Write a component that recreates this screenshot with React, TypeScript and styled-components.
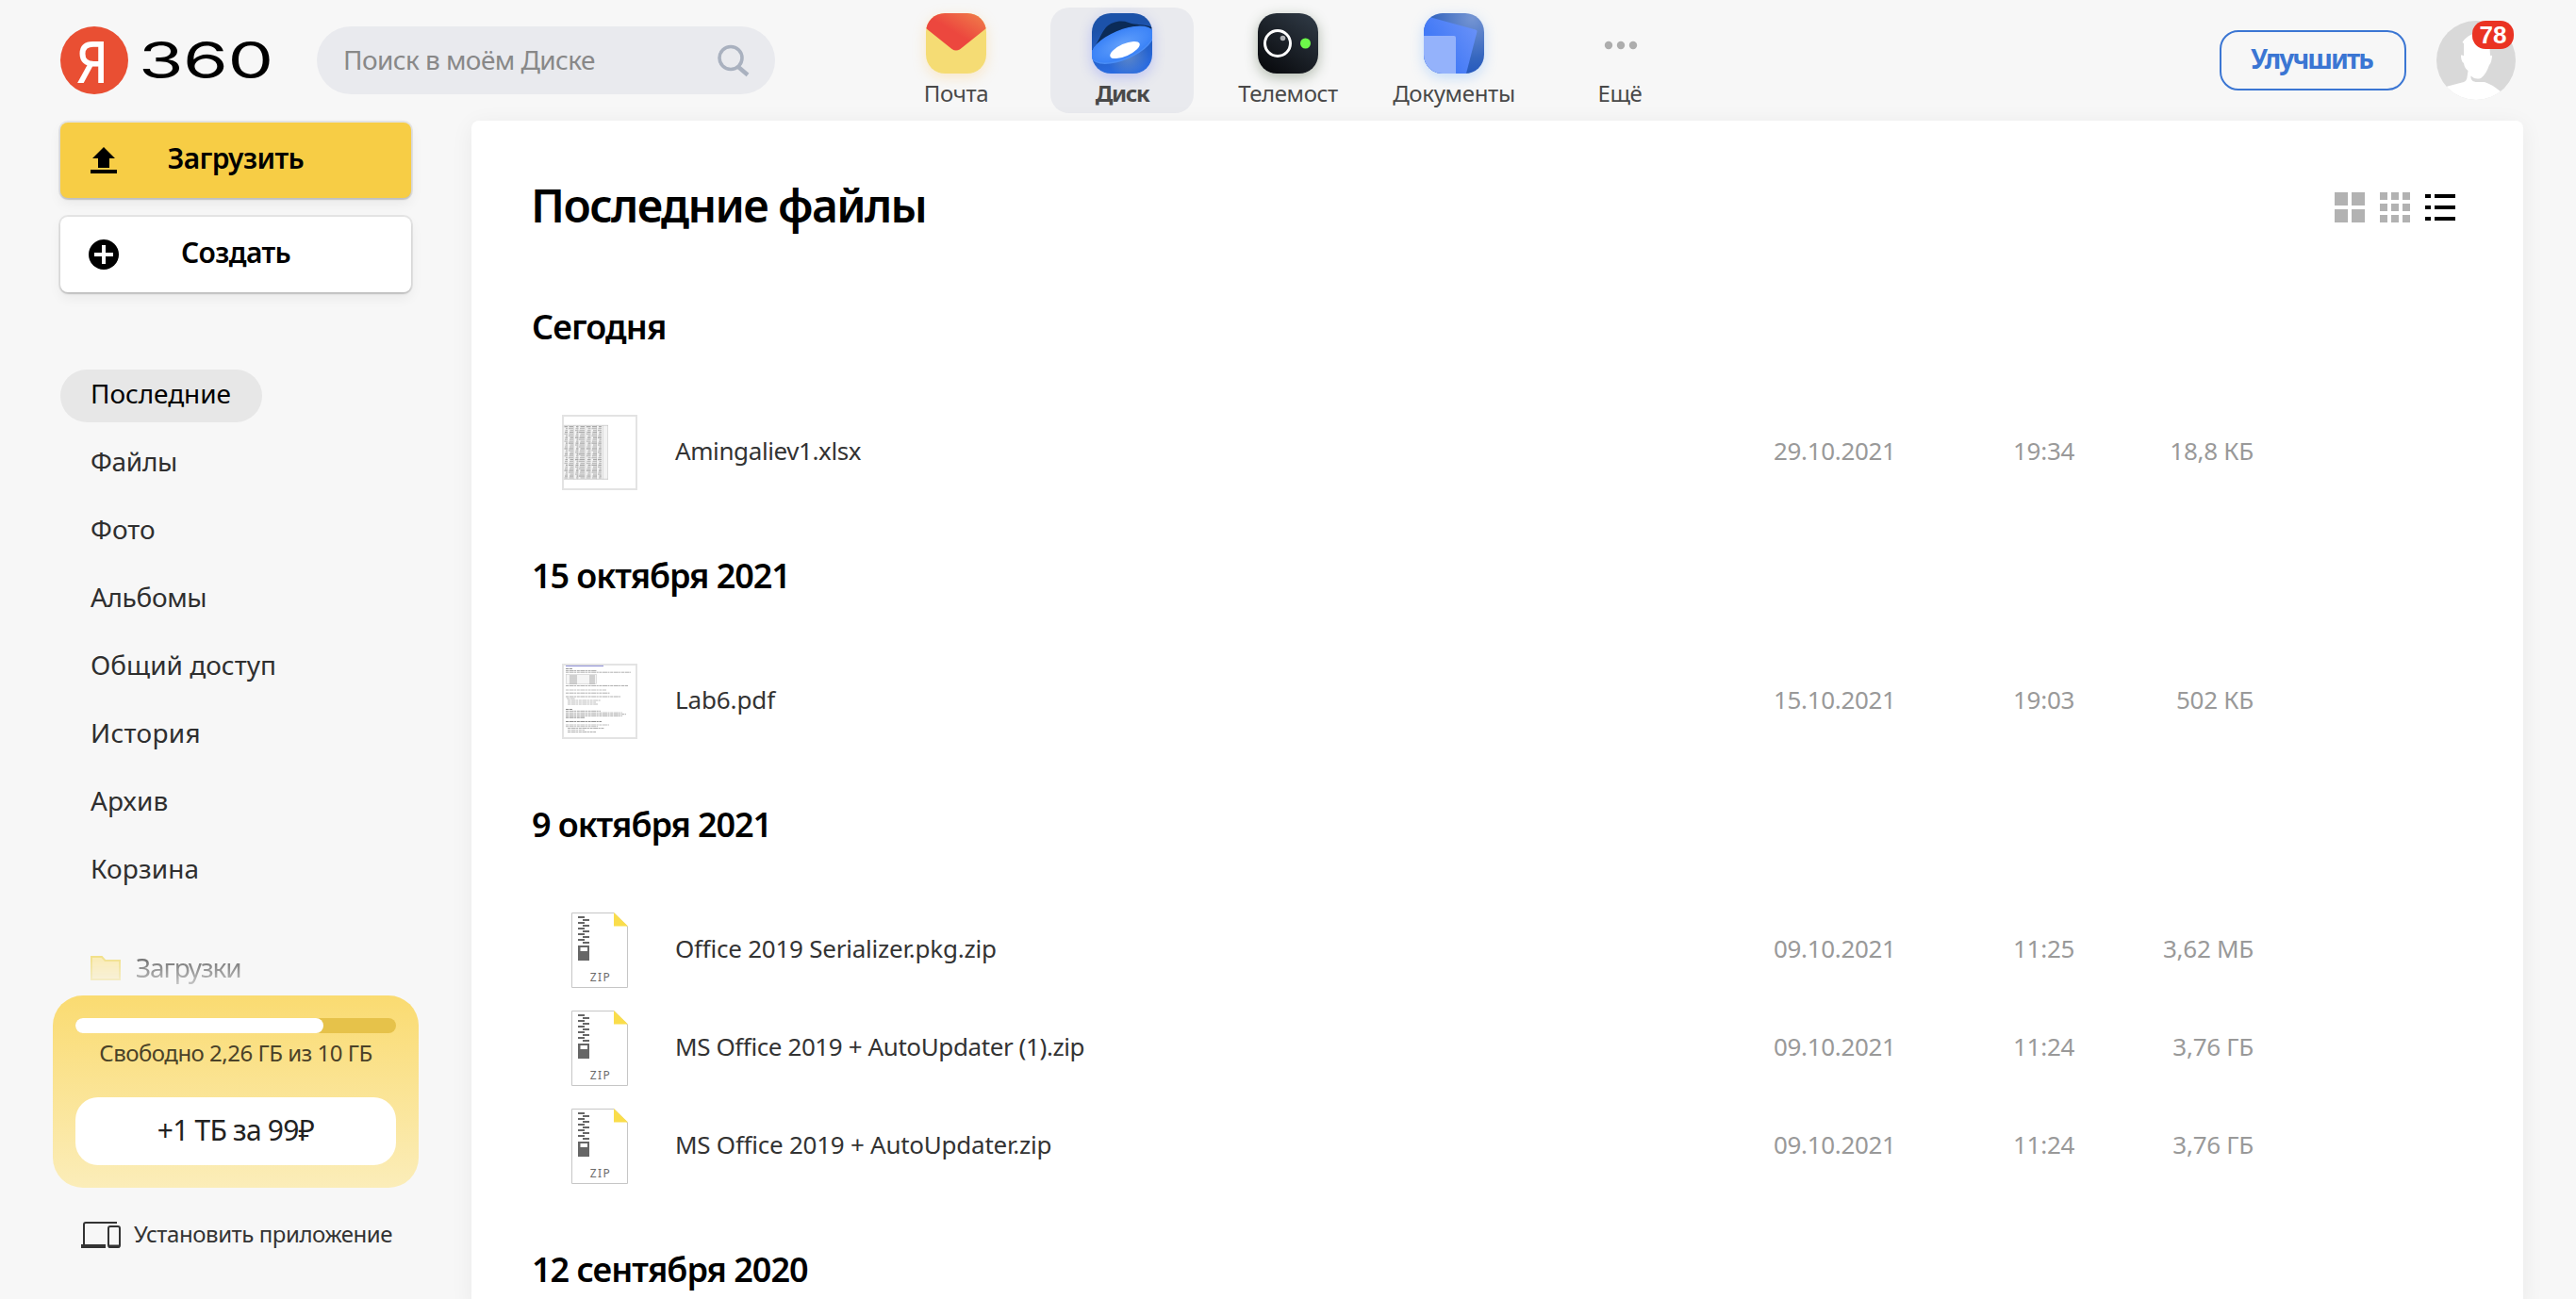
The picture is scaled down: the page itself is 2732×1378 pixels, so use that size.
import React from 'react';
import styled, { createGlobalStyle } from 'styled-components';

const GlobalStyle = createGlobalStyle`
  *, *::before, *::after { box-sizing: border-box; }
  body { margin: 0; background: #f7f7f7; font-family: "Noto Sans", "Open Sans", sans-serif; color: #000; }
  h1, h2, p { margin: 0; }
  svg { display: block; flex: none; }
  button { font: inherit; border: 0; padding: 0; }
`;

/* ---------- shared ---------- */

const Spaced = styled.span<{ $ls?: number }>`
  letter-spacing: ${p => p.$ls ?? 0}px;
  white-space: nowrap;
`;

const Page = styled.div`
  display: flex;
  flex-direction: column;
  width: 2732px;
  height: 1378px;
  overflow: hidden;
  background: #f7f7f7;
`;

const Body = styled.div`
  display: flex;
  flex: 1;
  min-height: 0;
`;

/* ---------- header ---------- */

const Header = styled.header`
  display: flex;
  flex: none;
  height: 128px;
  padding: 0 64px;
`;

const Logo = styled.div`
  display: flex;
  gap: 11px;
  width: 224px;
  height: 72px;
  margin-top: 28px;
`;

const LogoMark = styled.span`
  display: flex;
  justify-content: center;
  width: 72px;
  height: 72px;
  border-radius: 50%;
  background: #e94f33;
  color: #fff;
  font: 500 61px/74px "Noto Sans", sans-serif;
`;

const LogoLetter = styled.span`
  transform: translateX(-2px) scaleX(0.86);
`;

const LogoNumber = styled.span`
  font: 400 54px/72px Inter, sans-serif;
  letter-spacing: -0.4px;
  transform: scaleX(1.43);
  transform-origin: left center;
`;

const SearchBox = styled.div`
  display: flex;
  justify-content: space-between;
  width: 486px;
  height: 72px;
  margin: 28px 0 0 48px;
  padding: 0 26px 0 28px;
  border-radius: 36px;
  background: #e9eaee;
  color: #888;
  font-size: 28px;
  line-height: 70px;
`;

const Services = styled.nav`
  display: flex;
  gap: 24px;
  margin: 8px 0 0 116px;
`;

const Service = styled.div<{ $active?: boolean }>`
  display: flex;
  flex-direction: column;
  align-items: center;
  gap: 5px;
  width: 152px;
  height: 112px;
  padding-top: 6px;
  border-radius: 20px;
  background: ${p => (p.$active ? '#e9eaee' : 'transparent')};
  color: #494949;
  font-size: 24px;
  font-weight: ${p => (p.$active ? 700 : 400)};
  line-height: 32px;
`;

const AppIcon = styled.div<{ $glow?: string }>`
  width: 64px;
  height: 64px;
  border-radius: 20px;
  overflow: hidden;
  box-shadow: ${p => (p.$glow ? `0 4px 14px ${p.$glow}` : 'none')};
`;

const Account = styled.div`
  display: flex;
  gap: 32px;
  margin-left: auto;
`;

const UpgradeButton = styled.button`
  width: 198px;
  height: 64px;
  margin-top: 32px;
  border: 2px solid #3b76d3;
  border-radius: 20px;
  background: transparent;
  color: #3b76d3;
  font-size: 28px;
  font-weight: 700;
  line-height: 56px;
  padding: 0 3px 4px 0;
`;

const Avatar = styled.div`
  position: relative;
  width: 84px;
  height: 84px;
  margin-top: 22px;
`;

const Badge = styled.span`
  position: absolute;
  top: 0;
  right: 2px;
  width: 44px;
  height: 30px;
  border-radius: 14px;
  background: #ea3323;
  color: #fff;
  font: 700 26px/30px "Liberation Sans", Arial, sans-serif;
  text-align: center;
`;

/* ---------- sidebar ---------- */

const Sidebar = styled.aside`
  display: flex;
  flex-direction: column;
  width: 500px;
  padding: 2px 56px 0;
`;

const Actions = styled.div`
  display: flex;
  flex-direction: column;
  gap: 20px;
  padding: 0 8px;
`;

const ActionButton = styled.button<{ $primary?: boolean }>`
  display: grid;
  grid-template-columns: 60px 1fr 60px;
  align-items: center;
  height: 80px;
  padding: 0 16px;
  border-radius: 8px;
  background: ${p => (p.$primary ? '#f7cd45' : '#fff')};
  box-shadow: 0 0 0 2px rgba(0, 0, 0, 0.07), 0 2px 2px rgba(0, 0, 0, 0.13), 0 6px 14px rgba(0, 0, 0, 0.06);
  color: #000;
  font-size: 30px;
  font-weight: 600;
  line-height: 74px;
  text-align: center;

  svg { justify-self: center; }
  span { padding-bottom: 4px; }
`;

const Nav = styled.ul`
  display: flex;
  flex-direction: column;
  align-items: flex-start;
  gap: 16px;
  margin: 82px 0 0;
  padding: 0 8px;
  list-style: none;
`;

const NavItem = styled.li<{ $active?: boolean }>`
  height: 56px;
  padding: 0 33px 0 32px;
  border-radius: 28px;
  background: ${p => (p.$active ? '#e7e7e7' : 'transparent')};
  color: ${p => (p.$active ? '#000' : '#2f2f2f')};
  font-size: 28px;
  line-height: 50px;
`;

const FolderLink = styled.div`
  display: flex;
  gap: 15px;
  height: 52px;
  margin-top: 52px;
  padding-left: 40px;
  color: #333;
  font-size: 28px;
  line-height: 45px;
  mask-image: linear-gradient(rgba(0, 0, 0, 0.88) 0, rgba(0, 0, 0, 0.2) 44px, transparent 52px);

  svg { margin-top: 10px; }
`;

const Promo = styled.section`
  display: flex;
  flex-direction: column;
  width: 388px;
  height: 204px;
  padding: 24px;
  border-radius: 32px;
  background: linear-gradient(#fadb71, #fbedb9);
`;

const Meter = styled.div`
  height: 16px;
  border-radius: 8px;
  background: #e6c24a;
`;

const MeterFill = styled.div`
  height: 100%;
  border-radius: 8px;
  background: #fff;
`;

const PromoText = styled.p`
  height: 68px;
  padding-top: 4px;
  color: #4a4228;
  font-size: 24px;
  line-height: 33px;
  text-align: center;
`;

const PromoButton = styled.button`
  height: 72px;
  border-radius: 24px;
  background: #fff;
  color: #222;
  font-size: 30px;
  font-weight: 450;
  line-height: 70px;
  padding-bottom: 2px;
`;

const Install = styled.div`
  display: flex;
  gap: 14px;
  padding: 36px 0 0 30px;
  color: #333;
  font-size: 24px;
  line-height: 25px;
`;

/* ---------- file panel ---------- */

const Panel = styled.main`
  width: 2176px;
  height: 1260px;
  padding-top: 57px;
  border-radius: 8px 8px 0 0;
  background: #fff;
  box-shadow: 0 4px 24px rgba(0, 0, 0, 0.06);
`;

const PanelHead = styled.div`
  display: flex;
  justify-content: space-between;
  height: 83px;
  padding: 0 72px 0 63px;
`;

const Title = styled.h1`
  font-size: 48px;
  font-weight: 600;
  line-height: 66px;
`;

const Views = styled.div`
  display: flex;
  gap: 16px;
  margin-top: 19px;
`;

const DayTitle = styled.h2`
  height: 160px;
  padding: 55px 0 0 64px;
  font-size: 36px;
  font-weight: 600;
  line-height: 48px;
`;

const FileRow = styled.div`
  display: grid;
  grid-template-columns: 120px 1165px 254px 120px 135px;
  align-items: center;
  height: 104px;
  padding-left: 96px;
  color: #999;
  font-size: 26px;
  line-height: 100px;
`;

const FileName = styled(Spaced)`
  color: #333;
  padding-bottom: 4px;
`;

const Cell = styled(Spaced)<{ $right?: boolean }>`
  padding-bottom: 4px;
  text-align: ${p => (p.$right ? 'right' : 'left')};
`;

const Thumb = styled.div`
  width: 80px;
  height: 80px;
  border: 2px solid #e3e3e3;
`;

const ZipWrap = styled.div`
  padding-left: 10px;
`;

/* ---------- icons ---------- */

const MailIcon = () => (
  <svg width="64" height="64" viewBox="0 0 64 64">
    <defs>
      <linearGradient id="mail" x1="0.2" y1="0.8" x2="1" y2="0">
        <stop offset="0.35" stopColor="#ec473e" />
        <stop offset="1" stopColor="#f0824b" />
      </linearGradient>
    </defs>
    <rect width="64" height="64" fill="#f5dc74" />
    <path d="M0 0H64V16L36.5 38Q32 41 27.500 38L0 16Z" fill="url(#mail)" />
  </svg>
);

const DiskIcon = () => (
  <svg width="64" height="64" viewBox="0 0 64 64">
    <defs>
      <linearGradient id="diskBg" x1="0" y1="0" x2="0.2" y2="1">
        <stop offset="0.3" stopColor="#1c52a9" />
        <stop offset="1" stopColor="#2a6be0" />
      </linearGradient>
      <radialGradient id="saucer" cx="0.5" cy="0.5" r="0.5">
        <stop offset="0" stopColor="#62a0fb" />
        <stop offset="1" stopColor="#3a82f7" />
      </radialGradient>
      <radialGradient id="diskGlow" cx="0.6" cy="0.72" r="0.35">
        <stop offset="0" stopColor="#5b86c9" />
        <stop offset="1" stopColor="#5b86c9" stopOpacity="0" />
      </radialGradient>
    </defs>
    <rect width="64" height="64" fill="url(#diskBg)" />
    <rect width="64" height="64" fill="url(#diskGlow)" />
    <path d="M0 39C8 30 9 22 15 15C21 9 31 7 39 10C47 13 55 11 64 15L50 30L10 44Z" fill="#0b2b57" />
    <ellipse cx="32.500" cy="34" rx="35.500" ry="15.500" transform="rotate(-23 32.5 34)" fill="#4a8df5" />
    <ellipse cx="32" cy="33" rx="35.500" ry="15" transform="rotate(-23 32 33)" fill="url(#saucer)" />
    <ellipse cx="35" cy="39" rx="17" ry="6.500" transform="rotate(-24 35 39)" fill="#fff" />
  </svg>
);

const TelemostIcon = () => (
  <svg width="64" height="64" viewBox="0 0 64 64">
    <defs>
      <linearGradient id="cam" x1="0.1" y1="1" x2="0.8" y2="0">
        <stop offset="0" stopColor="#07080b" />
        <stop offset="1" stopColor="#2e3843" />
      </linearGradient>
    </defs>
    <rect width="64" height="64" fill="url(#cam)" />
    <circle cx="21" cy="32" r="13.500" fill="none" stroke="#fff" strokeWidth="3" />
    <circle cx="26.500" cy="26.500" r="2.800" fill="#aeb0b4" />
    <circle cx="50.500" cy="32" r="5.500" fill="#6dfb4a" />
  </svg>
);

const DocsIcon = () => (
  <svg width="64" height="64" viewBox="0 0 64 64">
    <defs>
      <radialGradient id="docsBg" cx="0.8" cy="0.08" r="0.95">
        <stop offset="0" stopColor="#7595d3" />
        <stop offset="0.7" stopColor="#3566bf" />
        <stop offset="1" stopColor="#2458bd" />
      </radialGradient>
      <linearGradient id="docsSheet" x1="0.3" y1="0.6" x2="1" y2="0.1">
        <stop offset="0" stopColor="#437af6" />
        <stop offset="1" stopColor="#6c93f8" />
      </linearGradient>
    </defs>
    <rect width="64" height="64" fill="url(#docsBg)" />
    <path d="M0 2.500L55 17.500Q56.800 18 56.400 20L45 64H0Z" fill="url(#docsSheet)" />
    <path d="M0 24H32Q34 24 34 26V64H0Z" fill="#94b2fb" />
  </svg>
);

const MoreIcon = () => (
  <svg width="64" height="64" viewBox="0 0 64 64" fill="#adadad">
    <circle cx="20" cy="34" r="4.200" />
    <circle cx="33" cy="34" r="4.200" />
    <circle cx="46" cy="34" r="4.200" />
  </svg>
);

const SearchIcon = () => (
  <svg width="36" height="72" viewBox="0 0 36 72" fill="none" stroke="#a9b1bf" strokeWidth="3.600">
    <circle cx="15" cy="33.500" r="12" />
    <path d="M23 43L33 51.500" strokeWidth="4.400" />
  </svg>
);

const AvatarIcon = () => (
  <svg width="84" height="84" viewBox="0 0 84 84">
    <defs>
      <clipPath id="avatar"><circle cx="42" cy="42" r="42" /></clipPath>
    </defs>
    <g clipPath="url(#avatar)">
      <rect width="84" height="84" fill="#d9d9d9" />
      <path
        d="M10 70L29 65Q32 64 32.500 60L33.500 53C31 51 29.500 49 29 45C26.500 43.500 26 39 26 36.500Q28 36 29 37.500C29 32 29 28 29 24L27.500 23C30 19 34 15 40 14C50 13 56 20 56.500 28L57 37Q59 36 59 38C58.500 41 58 45 56 47C54 53 51 58 47 61Q41 63 36.500 58.500C36 63 39 65 43 65H51Q58 67 68 75V84H10Z"
        fill="#fff"
      />
    </g>
  </svg>
);

const UploadIcon = () => (
  <svg width="32" height="32" viewBox="0 0 32 32">
    <path d="M16 2L28 14H22V24H10V14H4ZM2 26H30V30H2Z" />
  </svg>
);

const PlusIcon = () => (
  <svg width="32" height="32" viewBox="0 0 32 32">
    <circle cx="16" cy="16" r="16" />
    <path d="M14 6H18V14H26V18H18V26H14V18H6V14H14Z" fill="#fff" />
  </svg>
);

const FolderIcon = () => (
  <svg width="33" height="26" viewBox="0 0 33 26">
    <path d="M1 1H12L15.500 5H31V25H1Z" fill="#fbe69a" stroke="#efd75e" strokeWidth="2" />
  </svg>
);

const DevicesIcon = () => (
  <svg width="42" height="28" viewBox="0 0 42 28" fill="none" stroke="#333" strokeWidth="2">
    <path d="M38 1H5Q3 1 3 3V24" />
    <path d="M0 26H26" strokeWidth="4" />
    <rect x="29" y="5" width="12" height="22" rx="2" />
    <path d="M29 26H41" strokeWidth="3" />
  </svg>
);

const TilesIcon = ({ n, size }: { n: number; size: number }) => (
  <svg width="32" height="32" viewBox="0 0 32 32" fill="#b2b2b2">
    {Array.from({ length: n * n }, (_, i) => (
      <rect key={i} x={(i % n) * (size + 4)} y={Math.floor(i / n) * (size + 4)} width={size} height={size} />
    ))}
  </svg>
);

const ListIcon = () => (
  <svg width="32" height="32" viewBox="0 0 32 32">
    {[2, 14, 26].map(y => <path key={y} d={`M0 ${y}h6v4h-6zM10 ${y}h22v4h-22z`} />)}
  </svg>
);

const ZipIcon = () => (
  <svg width="60" height="80" viewBox="0 0 60 80">
    <path d="M0.500 0.500H45L59.500 15V79.500H0.500Z" fill="#fff" stroke="#c6c6c6" />
    <path d="M45 0L60 14.500H45Z" fill="#fadd4b" />
    {[0, 1, 2, 3, 4].map(i => (
      <path key={i} d={`M7 ${4 + i * 6}h7v2h-7zM12 ${7 + i * 6}h7v2h-7z`} fill="#666" />
    ))}
    <path d="M7 35h12v16h-12zM9.500 37v4h7.500v-4z" fill="#666" fillRule="evenodd" />
    <text x="31" y="72.500" textAnchor="middle" fontSize="12" letterSpacing="1.400" fill="#6b6b6b">ZIP</text>
  </svg>
);

const sheetColumns = [[0.5, 3.5], [5, 5], [12, 3.5], [16, 6], [24, 4.5], [29.5, 5.5], [36, 4]];

const SheetPreview = () => (
  <svg width="76" height="76" viewBox="0 0 76 76">
    <rect x="0" y="9" width="47" height="57.500" fill="#f3f3f3" />
    {[10.500, 14.500, 23, 34.500, 41.500, 46.500].map(x => <path key={x} d={`M${x} 9V66.500`} stroke="#d6d6d6" strokeWidth="0.800" />)}
    {Array.from({ length: 29 }, (_, r) =>
      sheetColumns.map(([x, w], c) => {
        const cut = ((r * 7 + c * 5) % 4) * 0.5;
        return <rect key={`${r}-${c}`} x={x + cut} y={10 + r * 1.94} width={w - cut} height="1.300" fill={r % 3 ? '#bdbdbd' : '#a8a8a8'} />;
      }),
    )}
    <path d="M0 9.300H47M0 66.300H47" stroke="#c4c4c4" strokeWidth="0.700" />
  </svg>
);

const pageLines: [number, number, number, number][] = [
  [3.4, 2, 7, 0], [5.500, 2, 33, 1], [7.200, 2, 69, 1], [21.500, 2, 66, 1], [26, 2, 43, 2], [29.200, 2, 47, 1], [33, 2, 58, 1],
  [35, 3, 9, 2], [37, 4, 35, 2], [39, 4, 30, 2], [41, 4, 32, 2], [46.500, 2, 7, 0], [48.300, 2, 37, 1], [50, 2, 60, 2], [51.700, 2, 64, 1],
  [53.400, 2, 60, 1], [55.200, 2, 20, 0], [59.500, 2, 38, 0], [63, 2, 46, 2], [64.700, 2, 34, 2], [66.500, 4, 39, 1], [68.500, 4, 18, 2], [70.500, 4, 30, 1],
];

const PagePreview = () => (
  <svg width="76" height="76" viewBox="0 0 76 76">
    <rect x="2" y="0" width="40" height="1" fill="#8d8fd6" />
    {pageLines.map(([y, x, w, tone]) => (
      <path key={y} d={`M${x} ${y}h${w}`} stroke={['#8c8c8c', '#aeaeae', '#bebebe'][tone]} strokeWidth="1" strokeDasharray="3 0.6 5 0.5 2 0.7" />
    ))}
    <rect x="2.500" y="9.500" width="32" height="10" fill="#f5f5f5" stroke="#ccc" strokeWidth="0.600" />
    {[11, 13, 15, 17, 19].map(y => <path key={y} d={`M6 ${y}h8M27 ${y}h6`} stroke="#a5a5a5" strokeWidth="0.900" />)}
  </svg>
);

/* ---------- data ---------- */

const services = [
  { name: 'Почта', ls: -0.33, icon: <MailIcon />, glow: 'rgba(255, 205, 120, 0.38)' },
  { name: 'Диск', ls: -1.4, icon: <DiskIcon />, glow: 'rgba(90, 110, 255, 0.32)', active: true },
  { name: 'Телемост', ls: -0.39, icon: <TelemostIcon />, glow: 'rgba(60, 85, 50, 0.38)' },
  { name: 'Документы', ls: -0.32, icon: <DocsIcon />, glow: 'rgba(110, 175, 255, 0.38)' },
  { name: 'Ещё', ls: -0.44, icon: <MoreIcon /> },
];

const navItems: [string, number][] = [
  ['Последние', -0.07], ['Файлы', -0.3], ['Фото', 0], ['Альбомы', -0.35],
  ['Общий доступ', 0], ['История', 0.3], ['Архив', 0.1], ['Корзина', 0.1],
];

type FileEntry = { name: string; ls: number; kind: 'sheet' | 'page' | 'zip'; date: string; time: string; size: string };

const days: { title: string; ls: number; files: FileEntry[] }[] = [
  {
    title: 'Сегодня', ls: -0.88,
    files: [{ name: 'Amingaliev1.xlsx', ls: -0.4, kind: 'sheet', date: '29.10.2021', time: '19:34', size: '18,8 КБ' }],
  },
  {
    title: '15 октября 2021', ls: -1.08,
    files: [{ name: 'Lab6.pdf', ls: -0.12, kind: 'page', date: '15.10.2021', time: '19:03', size: '502 КБ' }],
  },
  {
    title: '9 октября 2021', ls: -1.1,
    files: [
      { name: 'Office 2019 Serializer.pkg.zip', ls: -0.23, kind: 'zip', date: '09.10.2021', time: '11:25', size: '3,62 МБ' },
      { name: 'MS Office 2019 + AutoUpdater (1).zip', ls: -0.4, kind: 'zip', date: '09.10.2021', time: '11:24', size: '3,76 ГБ' },
      { name: 'MS Office 2019 + AutoUpdater.zip', ls: -0.25, kind: 'zip', date: '09.10.2021', time: '11:24', size: '3,76 ГБ' },
    ],
  },
  { title: '12 сентября 2020', ls: -1, files: [] },
];

const previews = {
  sheet: <Thumb><SheetPreview /></Thumb>,
  page: <Thumb><PagePreview /></Thumb>,
  zip: <ZipWrap><ZipIcon /></ZipWrap>,
};

const usedShare = (10 - 2.26) / 10;

export default function App() {
  return (
    <Page>
      <GlobalStyle />
      <Header>
        <Logo>
          <LogoMark><LogoLetter>Я</LogoLetter></LogoMark>
          <LogoNumber>360</LogoNumber>
        </Logo>
        <SearchBox>
          <Spaced $ls={-0.58}>Поиск в моём Диске</Spaced>
          <SearchIcon />
        </SearchBox>
        <Services>
          {services.map(s => (
            <Service key={s.name} $active={s.active}>
              <AppIcon $glow={s.glow}>{s.icon}</AppIcon>
              <Spaced $ls={s.ls}>{s.name}</Spaced>
            </Service>
          ))}
        </Services>
        <Account>
          <UpgradeButton><Spaced $ls={-1.9}>Улучшить</Spaced></UpgradeButton>
          <Avatar>
            <AvatarIcon />
            <Badge>78</Badge>
          </Avatar>
        </Account>
      </Header>
      <Body>
        <Sidebar>
          <Actions>
            <ActionButton $primary><UploadIcon /><Spaced $ls={-0.6}>Загрузить</Spaced></ActionButton>
            <ActionButton><PlusIcon /><Spaced $ls={-0.65}>Создать</Spaced></ActionButton>
          </Actions>
          <Nav>
            {navItems.map(([label, ls], i) => (
              <NavItem key={label} $active={i === 0}><Spaced $ls={ls}>{label}</Spaced></NavItem>
            ))}
          </Nav>
          <FolderLink><FolderIcon /><Spaced $ls={-1.1}>Загрузки</Spaced></FolderLink>
          <Promo>
            <Meter><MeterFill style={{ width: `${usedShare * 100}%` }} /></Meter>
            <PromoText><Spaced $ls={-0.5}>Свободно 2,26 ГБ из 10 ГБ</Spaced></PromoText>
            <PromoButton><Spaced $ls={-0.8}>+1 ТБ за 99₽</Spaced></PromoButton>
          </Promo>
          <Install><DevicesIcon /><Spaced $ls={-0.44}>Установить приложение</Spaced></Install>
        </Sidebar>
        <Panel>
          <PanelHead>
            <Title><Spaced $ls={-1.62}>Последние файлы</Spaced></Title>
            <Views>
              <TilesIcon n={2} size={14} />
              <TilesIcon n={3} size={8} />
              <ListIcon />
            </Views>
          </PanelHead>
          {days.map(day => (
            <section key={day.title}>
              <DayTitle><Spaced $ls={day.ls}>{day.title}</Spaced></DayTitle>
              {day.files.map(f => (
                <FileRow key={f.name}>
                  {previews[f.kind]}
                  <FileName $ls={f.ls}>{f.name}</FileName>
                  <Cell $ls={-0.34}>{f.date}</Cell>
                  <Cell $ls={-0.27}>{f.time}</Cell>
                  <Cell $ls={-0.27} $right>{f.size}</Cell>
                </FileRow>
              ))}
            </section>
          ))}
        </Panel>
      </Body>
    </Page>
  );
}
